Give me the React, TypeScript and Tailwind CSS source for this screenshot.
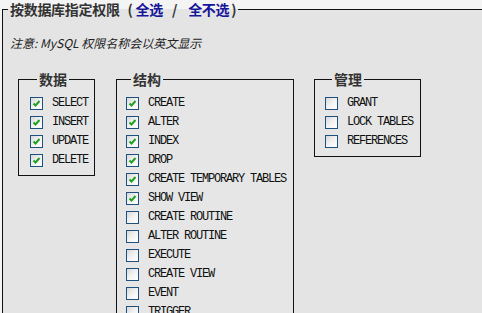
import React from "react";

type Item = { label: string; checked: boolean };

const data: Item[] = [
  { label: "SELECT", checked: true },
  { label: "INSERT", checked: true },
  { label: "UPDATE", checked: true },
  { label: "DELETE", checked: true },
];

const struct: Item[] = [
  { label: "CREATE", checked: true },
  { label: "ALTER", checked: true },
  { label: "INDEX", checked: true },
  { label: "DROP", checked: true },
  { label: "CREATE TEMPORARY TABLES", checked: true },
  { label: "SHOW VIEW", checked: true },
  { label: "CREATE ROUTINE", checked: false },
  { label: "ALTER ROUTINE", checked: false },
  { label: "EXECUTE", checked: false },
  { label: "CREATE VIEW", checked: false },
  { label: "EVENT", checked: false },
  { label: "TRIGGER", checked: false },
];

const admin: Item[] = [
  { label: "GRANT", checked: false },
  { label: "LOCK TABLES", checked: false },
  { label: "REFERENCES", checked: false },
];

function Box({ checked }: { checked: boolean }) {
  return (
    <div className="relative w-[13px] h-[13px] shrink-0 border border-[#1c5180] bg-gradient-to-br from-[#d8d8d8] via-[#f2f2f2] to-[#ffffff]">
      {checked && (
        <svg className="absolute left-0 top-0" width="11" height="11" viewBox="0 0 11 11">
          <path d="M2.5 5.5 L4.5 7.5 L8.5 3" fill="none" stroke="#21a121" strokeWidth="2" />
        </svg>
      )}
    </div>
  );
}

function Group({
  title,
  items,
  width,
  legendMl,
  padL,
}: {
  title: string;
  items: Item[];
  width: string;
  legendMl: string;
  padL: string;
}) {
  return (
    <fieldset className={`border border-[#111] bg-[#e6e6e6] pt-[7px] pb-[5px] ${width} ${padL}`}>
      <legend
        className={`${legendMl} px-[2px] text-[14px] leading-[16px] font-bold text-[#333]`}
        style={{ fontFamily: '"Noto Sans CJK SC", sans-serif' }}
      >
        {title}
      </legend>
      {items.map((it) => (
        <div key={it.label} className="flex items-center h-[19px] gap-[9px]">
          <Box checked={it.checked} />
          <span
            className="text-[12px] leading-[19px] tracking-[-1.2px] text-[#111] whitespace-nowrap"
            style={{ fontFamily: '"Liberation Mono", monospace' }}
          >
            {it.label}
          </span>
        </div>
      ))}
    </fieldset>
  );
}

export default function App() {
  return (
    <div className="w-[482px] h-[313px] overflow-hidden bg-[#f4f4f4]">
      <fieldset className="ml-[2px] w-[560px] min-h-[400px] border border-[#111] bg-[#e4e4e4] px-0">
        <legend
          className="ml-[5px] px-[2px] text-[14px] leading-[18px] font-bold text-[#333] tracking-[-0.3px]"
          style={{ fontFamily: '"Noto Sans CJK SC", sans-serif' }}
        >
          按数据库指定权限<span className="ml-[8px]">(</span>
          <span className="text-[#16169a] ml-[3px]">全选</span>
          <span className="ml-[9px] mr-[11px]">/</span>
          <span className="text-[#16169a]">全不选</span>
          <span className="ml-[2px]">)</span>
        </legend>
        <div
          className="mt-[18px] ml-[7px] text-[12px] leading-[14px] italic text-[#222]"
          style={{ fontFamily: '"Noto Sans CJK SC", sans-serif' }}
        >
          注意: MySQL 权限名称会以英文显示
        </div>
        <div className="mt-[21px] ml-[15px] flex items-start">
          <Group title="数据" items={data} width="w-[77px]" legendMl="ml-[7px]" padL="pl-[11px]" />
          <div className="w-[21px] shrink-0" />
          <Group title="结构" items={struct} width="w-[178px]" legendMl="ml-[5px]" padL="pl-[9px]" />
          <div className="w-[20px] shrink-0" />
          <Group title="管理" items={admin} width="w-[107px]" legendMl="ml-[7px]" padL="pl-[10px]" />
        </div>
      </fieldset>
    </div>
  );
}
